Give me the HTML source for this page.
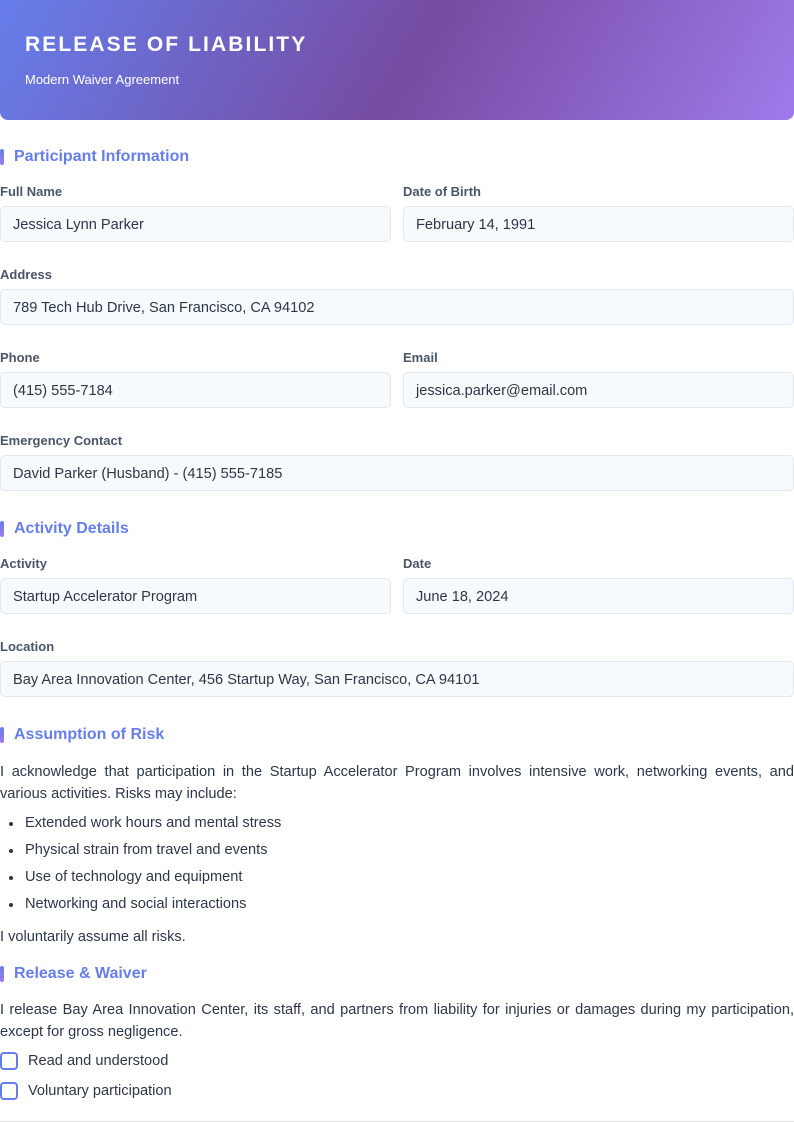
<!DOCTYPE html>
<html><head><meta charset="utf-8"><style>
*{box-sizing:border-box;margin:0;padding:0}
body{width:794px;height:1123px;overflow:hidden;background:#fff;font-family:"Liberation Sans",Arial,sans-serif;color:#2d3748;position:relative}
.hdr{position:absolute;left:0;top:0;width:794px;height:120px;border-radius:0 0 8px 8px;background:linear-gradient(120deg,#667eea 0%,#764ba2 52%,#9f7aea 100%)}
.hdr h1{position:absolute;left:25px;top:33px;color:#fff;font-size:21px;letter-spacing:2.1px;font-weight:bold}
.hdr p{position:absolute;left:25px;top:72px;color:#fff;font-size:13px}
.sec{position:absolute;left:0;font-size:16px;font-weight:bold;color:#667eea;padding-left:14px;height:20px;line-height:20px}
.sec:before{content:"";position:absolute;left:0;top:2px;width:4px;height:16px;border-radius:2px;background:linear-gradient(#667eea,#9f7aea)}
.lbl{position:absolute;font-size:13px;font-weight:bold;color:#4a5568}
.in{position:absolute;height:36px;background:#f7fafc;border:1px solid #e2e8f0;border-radius:5px;font-size:14.6px;line-height:36px;padding-left:12px;color:#2d3748}
.w{width:794px;left:0}.l{left:0;width:391px}.r{left:403px;width:391px}
.txt{position:absolute;left:0;width:794px;font-size:14.6px;line-height:22px;text-align:justify;color:#2d3748}
.li{position:absolute;left:25px;font-size:14.6px}
.li:before{content:"";position:absolute;left:-16px;top:7px;width:4px;height:4px;border-radius:50%;background:#2d3748}
.cb{position:absolute;left:0;font-size:14.6px;padding-left:28px;line-height:18px}
.cb:before{content:"";position:absolute;left:0;top:0;width:18px;height:18px;border:2px solid #667eea;border-radius:4px;box-sizing:border-box}
</style></head><body>
<div class="hdr"><h1>RELEASE OF LIABILITY</h1><p>Modern Waiver Agreement</p></div>
<div class="sec" style="top:147px">Participant Information</div>
<div class="lbl" style="left:0;top:184px">Full Name</div><div class="lbl" style="left:403px;top:184px">Date of Birth</div>
<div class="in l" style="top:206px">Jessica Lynn Parker</div><div class="in r" style="top:206px">February 14, 1991</div>
<div class="lbl" style="left:0;top:267px">Address</div>
<div class="in w" style="top:289px">789 Tech Hub Drive, San Francisco, CA 94102</div>
<div class="lbl" style="left:0;top:350px">Phone</div><div class="lbl" style="left:403px;top:350px">Email</div>
<div class="in l" style="top:372px">(415) 555-7184</div><div class="in r" style="top:372px">jessica.parker@email.com</div>
<div class="lbl" style="left:0;top:433px">Emergency Contact</div>
<div class="in w" style="top:455px">David Parker (Husband) - (415) 555-7185</div>
<div class="sec" style="top:519px">Activity Details</div>
<div class="lbl" style="left:0;top:556px">Activity</div><div class="lbl" style="left:403px;top:556px">Date</div>
<div class="in l" style="top:578px">Startup Accelerator Program</div><div class="in r" style="top:578px">June 18, 2024</div>
<div class="lbl" style="left:0;top:639px">Location</div>
<div class="in w" style="top:661px">Bay Area Innovation Center, 456 Startup Way, San Francisco, CA 94101</div>
<div class="sec" style="top:725px">Assumption of Risk</div>
<div class="txt" style="top:761px">I acknowledge that participation in the Startup Accelerator Program involves intensive work, networking events, and various activities. Risks may include:</div>
<div class="li" style="top:815px">Extended work hours and mental stress</div>
<div class="li" style="top:842px">Physical strain from travel and events</div>
<div class="li" style="top:869px">Use of technology and equipment</div>
<div class="li" style="top:896px">Networking and social interactions</div>
<div class="txt" style="top:926px">I voluntarily assume all risks.</div>
<div class="sec" style="top:964px">Release &amp; Waiver</div>
<div class="txt" style="top:999px">I release Bay Area Innovation Center, its staff, and partners from liability for injuries or damages during my participation, except for gross negligence.</div>
<div class="cb" style="top:1052px;line-height:19px">Read and understood</div>
<div class="cb" style="top:1082px;line-height:19px">Voluntary participation</div>
<div style="position:absolute;left:0;top:1121px;width:794px;height:1px;background:#e2e8f0"></div>
</body></html>
